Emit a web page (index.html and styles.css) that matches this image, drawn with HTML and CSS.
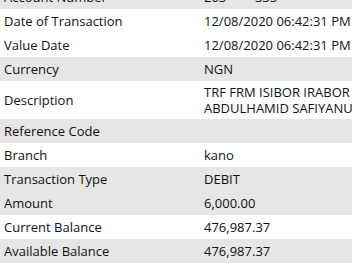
FILE: index.html
```html
<!DOCTYPE html>
<html lang="en">
<head>
<meta charset="utf-8">
<title>Transaction Details</title>
<link rel="stylesheet" href="styles.css">
</head>
<body>
<div class="details">
  <div class="row shade"><div class="label">Account Number</div><div class="value">203****333</div></div>
  <div class="row"><div class="label">Date of Transaction</div><div class="value">12/08/2020 06:42:31 PM</div></div>
  <div class="row"><div class="label">Value Date</div><div class="value">12/08/2020 06:42:31 PM</div></div>
  <div class="row shade"><div class="label">Currency</div><div class="value">NGN</div></div>
  <div class="row tall"><div class="label">Description</div><div class="value multi"><span class="line">TRF FRM ISIBOR IRABOR TO</span><span class="line">ABDULHAMID SAFIYANU</span></div></div>
  <div class="row shade"><div class="label">Reference Code</div><div class="value"></div></div>
  <div class="row"><div class="label">Branch</div><div class="value">kano</div></div>
  <div class="row shade"><div class="label">Transaction Type</div><div class="value">DEBIT</div></div>
  <div class="row shade"><div class="label">Amount</div><div class="value">6,000.00</div></div>
  <div class="row"><div class="label">Current Balance</div><div class="value">476,987.37</div></div>
  <div class="row shade"><div class="label">Available Balance</div><div class="value">476,987.37</div></div>
</div>
</body>
</html>
```

FILE: styles.css
```css
html, body {
  margin: 0;
  padding: 0;
  overflow: hidden;
  background: #ffffff;
}
body {
  font-family: "Open Sans", "Noto Sans", sans-serif;
  font-size: 13px;
  color: #111111;
}
.details {
  margin-top: -15px;
  display: flex;
  flex-direction: column;
}
.row {
  display: grid;
  grid-template-columns: 200px 1fr;
  align-items: center;
  height: 24px;
  line-height: 24px;
}
.row.shade {
  background: #e6e6e6;
}
.row.tall {
  height: 38px;
}
.label {
  padding-left: 4px;
  white-space: nowrap;
}
.value {
  padding-left: 4px;
  white-space: nowrap;
  overflow: hidden;
}
.value.multi {
  line-height: 16px;
  display: flex;
  flex-direction: column;
}
.line {
  display: block;
}
```
